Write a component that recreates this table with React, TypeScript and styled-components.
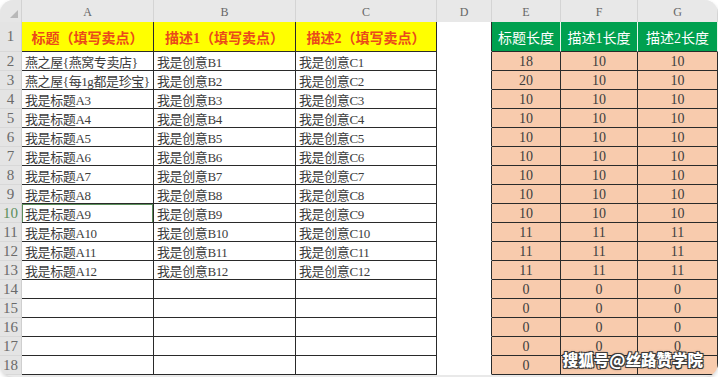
import React from 'react';
import styled, { createGlobalStyle, css } from 'styled-components';

const GlobalStyle = createGlobalStyle`
  html, body {
    margin: 0;
    padding: 0;
    background: #ffffff;
  }
  * {
    box-sizing: border-box;
  }
`;

const serif = `"Liberation Serif", "Noto Sans CJK SC", serif`;
const line = '#2a2a2a';

const Card = styled.div`
  position: relative;
  width: 718px;
  height: 377px;
  border-radius: 14px;
  overflow: hidden;
  background: #e9e9e9;
  box-shadow: 0 2px 4px rgba(0, 0, 0, 0.18);
`;

const Sheet = styled.div`
  display: grid;
  grid-template-columns: 22px 132px 142px 141px 55px 69px 77px 80px;
  grid-template-rows: 22px 30px repeat(17, 19px);
  font-family: ${serif};
`;

const Corner = styled.div`
  background: #e6e6e6;
  border-right: 1px solid #d2d2d2;
  display: flex;
  align-items: flex-end;
  justify-content: flex-end;
  padding: 0 3px 4px 0;

  &::after {
    content: '';
    width: 0;
    height: 0;
    border-left: 8px solid transparent;
    border-bottom: 8px solid #b8b8b8;
  }
`;

const ColHead = styled.div`
  background: #e8e8e8;
  border-right: 1px solid #d4d4d4;
  color: #666;
  font-size: 12px;
  display: flex;
  align-items: center;
  justify-content: center;
  padding-top: 3px;
`;

const RowNum = styled.div<{ $active?: boolean }>`
  background: #e4e4e4;
  border-right: 1px solid #cfcfcf;
  border-bottom: 1px solid #d8d8d8;
  color: ${({ $active }) => ($active ? '#5b8f5b' : '#6a6a6a')};
  font-size: 15px;
  display: flex;
  align-items: center;
  justify-content: center;
`;

type Tone = 'yellow' | 'green' | 'peach' | 'plain' | 'gap';

const Cell = styled.div<{ $tone: Tone; $center?: boolean; $selected?: boolean }>`
  display: flex;
  align-items: center;
  justify-content: ${({ $center }) => ($center ? 'center' : 'flex-start')};
  padding: 1px 3px 0;
  white-space: nowrap;
  overflow: hidden;
  font-size: 13px;
  letter-spacing: -0.4px;
  color: #3d3d3d;
  border-right: 1px solid ${line};
  border-bottom: 1px solid ${line};

  ${({ $tone }) =>
    $tone === 'yellow' &&
    css`
      background: #ffff00;
      color: #ea4a1a;
      font-weight: bold;
      font-size: 14px;
      letter-spacing: 0;
      justify-content: center;
    `}

  ${({ $tone }) =>
    $tone === 'green' &&
    css`
      background: #00a04f;
      color: #ffffff;
      font-size: 14px;
      letter-spacing: 0;
      justify-content: center;
      border-right-color: #e8f5ec;
    `}

  ${({ $tone }) =>
    $tone === 'peach' &&
    css`
      background: #f8cbad;
      font-size: 14px;
      letter-spacing: 0;
    `}

  ${({ $tone }) =>
    $tone === 'plain' &&
    css`
      background: #ffffff;
    `}

  ${({ $tone }) =>
    $tone === 'gap' &&
    css`
      background: #ffffff;
      border-bottom-color: transparent;
    `}

  ${({ $selected }) =>
    $selected &&
    css`
      box-shadow: inset 1px 1px 0 #5b8f5b, inset -1px 0 0 #5b8f5b;
    `}
`;

const Watermark = styled.div`
  position: absolute;
  right: 15px;
  bottom: 7px;
  font-family: "Noto Sans CJK SC", sans-serif;
  font-weight: 900;
  font-size: 15.5px;
  color: #ffffff;
  text-shadow:
    1px 1px 0 #3a3a3a,
    -1px -1px 0 #3a3a3a,
    1px -1px 0 #3a3a3a,
    -1px 1px 0 #3a3a3a,
    0 0 3px rgba(0, 0, 0, 0.6);
`;

const letters = ['A', 'B', 'C', 'D', 'E', 'F', 'G'];

const titles = [
  '燕之屋{燕窝专卖店}',
  '燕之屋{每1g都是珍宝}',
  ...Array.from({ length: 10 }, (_, i) => `我是标题A${i + 3}`),
];

const lengths = [
  [18, 10, 10],
  [20, 10, 10],
  ...Array.from({ length: 7 }, () => [10, 10, 10]),
  [11, 11, 11],
  [11, 11, 11],
  [11, 11, 11],
];

type Row = { a: string; b: string; c: string; e: number; f: number; g: number };

const rows: Row[] = Array.from({ length: 17 }, (_, i) => {
  if (i < 12) {
    const [e, f, g] = lengths[i];
    return { a: titles[i], b: `我是创意B${i + 1}`, c: `我是创意C${i + 1}`, e, f, g };
  }
  return { a: '', b: '', c: '', e: 0, f: 0, g: 0 };
});

export default function App() {
  return (
    <>
      <GlobalStyle />
      <Card>
        <Sheet>
          <Corner />
          {letters.map((l) => (
            <ColHead key={l}>{l}</ColHead>
          ))}

          <RowNum>1</RowNum>
          <Cell $tone="yellow">标题（填写卖点）</Cell>
          <Cell $tone="yellow">描述1（填写卖点）</Cell>
          <Cell $tone="yellow">描述2（填写卖点）</Cell>
          <Cell $tone="gap" />
          <Cell $tone="green">标题长度</Cell>
          <Cell $tone="green">描述1长度</Cell>
          <Cell $tone="green">描述2长度</Cell>

          {rows.map((r, i) => {
            const n = i + 2;
            return (
              <React.Fragment key={n}>
                <RowNum $active={n === 10}>{n}</RowNum>
                <Cell $tone="plain" $selected={n === 10}>{r.a}</Cell>
                <Cell $tone="plain">{r.b}</Cell>
                <Cell $tone="plain">{r.c}</Cell>
                <Cell $tone="gap" />
                <Cell $tone="peach" $center>{r.e}</Cell>
                <Cell $tone="peach" $center>{r.f}</Cell>
                <Cell $tone="peach" $center>{r.g}</Cell>
              </React.Fragment>
            );
          })}
        </Sheet>
        <Watermark>搜狐号@丝路赞学院</Watermark>
      </Card>
    </>
  );
}
